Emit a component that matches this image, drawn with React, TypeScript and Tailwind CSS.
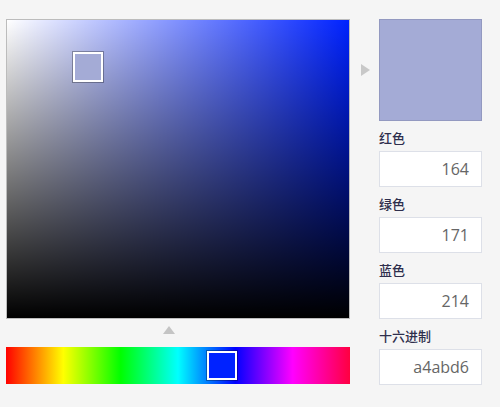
import React from "react";

const hex = "a4abd6";
const rgb = { r: 164, g: 171, b: 214 };

function Field({ label, value }: { label: string; value: string }) {
  return (
    <div>
      <div className="pt-[8px] pb-[4px] text-[13px] leading-[18px] font-medium text-[#2e2e4c] font-['Noto_Sans_CJK_SC','Noto_Sans',sans-serif]">
        {label}
      </div>
      <div className="h-[36px] w-[103px] bg-white border border-[#dde0e8] flex items-center justify-end pr-[12px] text-[16px] text-[#666666] font-['Open_Sans','Noto_Sans',sans-serif]">
        {value}
      </div>
    </div>
  );
}

export default function App() {
  return (
    <div className="w-[500px] h-[407px] bg-[#f5f5f5] flex pt-[19px] pl-[6px] overflow-hidden">
      {/* picker */}
      <div className="w-[344px] flex flex-col">
        <div className="relative h-[300px] w-[344px] border border-[rgba(140,140,140,0.55)] bg-[#0022ff] bg-clip-padding">
          <div className="absolute inset-0 bg-[linear-gradient(to_right,#ffffff,rgba(255,255,255,0))]" />
          <div className="absolute inset-0 bg-[linear-gradient(to_bottom,rgba(0,0,0,0),#000000)]" />
          <div className="absolute left-[65px] top-[31px] w-[32px] h-[32px] border border-black/30">
            <div className="w-full h-full border-2 border-white bg-[#a4abd6]" />
          </div>
        </div>
        <div className="h-[28px] pt-[7px] pl-[157px]">
          <div className="w-0 h-0 border-l-[6px] border-r-[6px] border-b-[8px] border-l-transparent border-r-transparent border-b-[#c4c4c4]" />
        </div>
        <div className="relative h-[37px] w-[344px] bg-[linear-gradient(to_right,#ff0000_0%,#ffff00_16.66%,#00ff00_33.33%,#00ffff_50%,#0000ff_66.66%,#ff00ff_83.33%,#ff0040_100%)]">
          <div className="absolute left-[200px] top-[3px] w-[32px] h-[31px] border border-black/30">
            <div className="w-full h-full border-2 border-white bg-[#0022ff]" />
          </div>
        </div>
      </div>

      {/* arrow */}
      <div className="w-[29px] h-[102px] flex items-center pl-[11px]">
        <div className="w-0 h-0 border-t-[6px] border-b-[6px] border-l-[9px] border-t-transparent border-b-transparent border-l-[#c8c8c8]" />
      </div>

      {/* values */}
      <div className="w-[103px] flex flex-col">
        <div className="h-[102px] w-[103px] bg-[#a4abd6] border border-black/10" />
        <Field label="红色" value={String(rgb.r)} />
        <Field label="绿色" value={String(rgb.g)} />
        <Field label="蓝色" value={String(rgb.b)} />
        <Field label="十六进制" value={hex} />
      </div>
    </div>
  );
}
